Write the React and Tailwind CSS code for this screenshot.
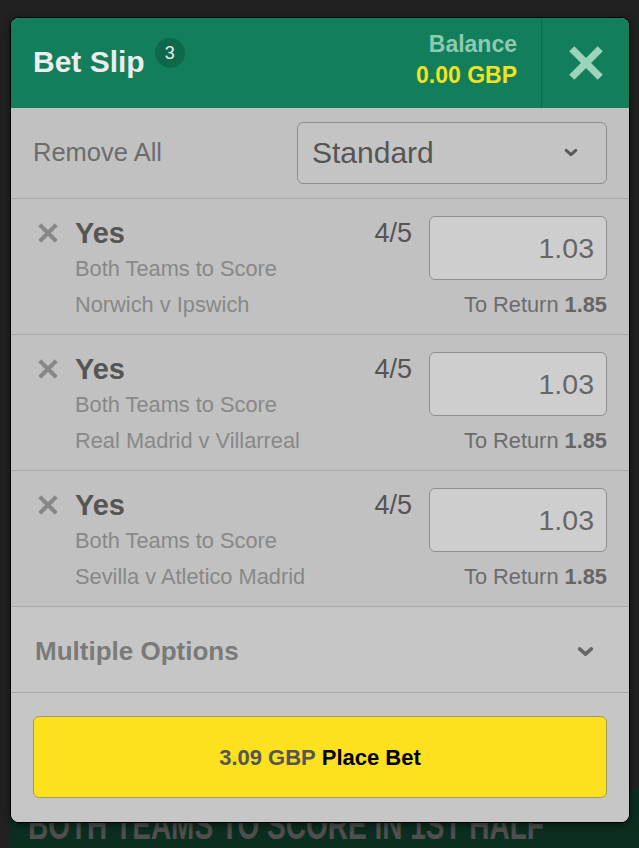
import React from 'react';

const bets = [
  { pick: 'Yes', market: 'Both Teams to Score', event: 'Norwich v Ipswich', odds: '4/5', stake: '1.03', ret: '1.85' },
  { pick: 'Yes', market: 'Both Teams to Score', event: 'Real Madrid v Villarreal', odds: '4/5', stake: '1.03', ret: '1.85' },
  { pick: 'Yes', market: 'Both Teams to Score', event: 'Sevilla v Atletico Madrid', odds: '4/5', stake: '1.03', ret: '1.85' }
];

function Chevron({ className }) {
  return (
    <svg viewBox="0 0 16 10" className={className} fill="none" stroke="currentColor" strokeWidth="3.4" strokeLinecap="round" strokeLinejoin="round">
      <polyline points="2.5,2.5 8,7.5 13.5,2.5" />
    </svg>
  );
}

function Cross({ className, stroke = 4 }) {
  return (
    <svg viewBox="0 0 24 24" className={className} fill="none" stroke="currentColor" strokeWidth={stroke} strokeLinecap="butt">
      <line x1="3" y1="3" x2="21" y2="21" />
      <line x1="21" y1="3" x2="3" y2="21" />
    </svg>
  );
}

export default function App() {
  return (
    <div className="relative w-[639px] h-[848px] overflow-hidden bg-[#212121]" style={{ fontFamily: '"Liberation Sans", Arial, sans-serif' }}>
      {/* page behind the slip */}
      <div className="flex h-full">
        <div className="flex-1 flex flex-col justify-end pl-[10px] pr-[6px]">
          <div className="h-[60px] bg-[#0c2e21] pl-[18px] pt-[17px] overflow-hidden">
            <div className="text-[40px] leading-none font-bold text-[#4f4f4f] whitespace-nowrap origin-left scale-x-[0.7]">
              BOTH TEAMS TO SCORE IN 1ST HALF
            </div>
          </div>
        </div>
        <div className="w-[2px] bg-[#1f9a35]" />
        <div className="w-[1px] bg-[#1c1c1c]" />
      </div>

      {/* bet slip */}
      <div className="absolute left-[11px] top-[18px] w-[618px] rounded-[8px] overflow-hidden bg-[#c1c1c1] ring-1 ring-black shadow-[0_2px_8px_rgba(0,0,0,0.6)]">
        <div className="h-[90px] bg-[#137e5c] flex items-stretch">
          <div className="flex-1 flex items-center pl-[22px]">
            <span className="text-[30px] font-bold text-[#ececec] mt-[-4px]">Bet Slip</span>
            <span className="ml-[10px] mt-[-20px] w-[30px] h-[30px] rounded-full bg-[#0e694b] text-[#ececec] text-[18px] flex items-center justify-center">3</span>
          </div>
          <div className="flex flex-col items-end justify-center pr-[24px] pb-[6px] font-bold text-[23px] leading-[31px]">
            <span className="text-[#8ccbb0]">Balance</span>
            <span className="text-[#f3e21c]">0.00 GBP</span>
          </div>
          <div className="w-[88px] border-l border-[#0d6a4b] flex items-center justify-center">
            <Cross className="w-[38px] h-[38px] text-[#9dd2bb]" stroke={4.6} />
          </div>
        </div>

        <div className="h-[91px] border-b border-[#a9a9a9] flex items-center justify-between pl-[22px] pr-[22px] pb-[1px]">
          <span className="text-[25.5px] text-[#6c6c6c]">Remove All</span>
          <div className="w-[310px] h-[62px] rounded-[6px] border border-[#8e8e8e] bg-[#c4c4c4] flex items-center justify-between pl-[14px] pr-[28px]">
            <span className="text-[30px] text-[#555]">Standard</span>
            <Chevron className="w-[14px] h-[9px] text-[#5a5a5a]" />
          </div>
        </div>

        {bets.map((b, i) => (
          <div key={i} className="h-[136px] border-b border-[#a9a9a9] flex pt-[16px] pl-[26px] pr-[22px]">
            <div className="h-[36px] flex items-center">
              <Cross className="w-[22px] h-[22px] text-[#878787]" stroke={4.5} />
            </div>
            <div className="flex-1 flex flex-col pl-[16px]">
              <span className="text-[29px] leading-[36px] font-bold text-[#555]">{b.pick}</span>
              <span className="text-[21.8px] leading-[36px] text-[#888]">{b.market}</span>
              <span className="text-[21.8px] leading-[36px] text-[#888]">{b.event}</span>
            </div>
            <div className="flex flex-col items-end">
              <div className="flex items-start gap-[17px]">
                <span className="text-[27px] leading-[36px] text-[#555]">{b.odds}</span>
                <div className="mt-[1px] w-[178px] h-[64px] rounded-[6px] border border-[#8e8e8e] bg-[#cecece] flex items-center justify-end pr-[12px]">
                  <span className="text-[28.5px] text-[#666]">{b.stake}</span>
                </div>
              </div>
              <span className="mt-[7px] text-[21.8px] leading-[36px] text-[#6c6c6c]">
                To Return <b className="text-[#666]">{b.ret}</b>
              </span>
            </div>
          </div>
        ))}

        <div className="h-[86px] border-b border-[#a9a9a9] bg-[#c6c6c6] flex items-center justify-between pl-[24px] pr-[35px] pt-[4px]">
          <span className="text-[26px] font-bold text-[#7a7a7a]">Multiple Options</span>
          <Chevron className="w-[17px] h-[11px] text-[#666]" />
        </div>

        <div className="h-[129px] bg-[#c6c6c6] px-[22px] pt-[23px]">
          <button className="w-full h-[82px] rounded-[6px] border border-[#9e9a63] bg-[#fde01e] flex items-center justify-center text-[22px] font-bold">
            <span className="text-[#555]">3.09 GBP</span>
            <span className="ml-[6px] text-black">Place Bet</span>
          </button>
        </div>
      </div>
    </div>
  );
}
